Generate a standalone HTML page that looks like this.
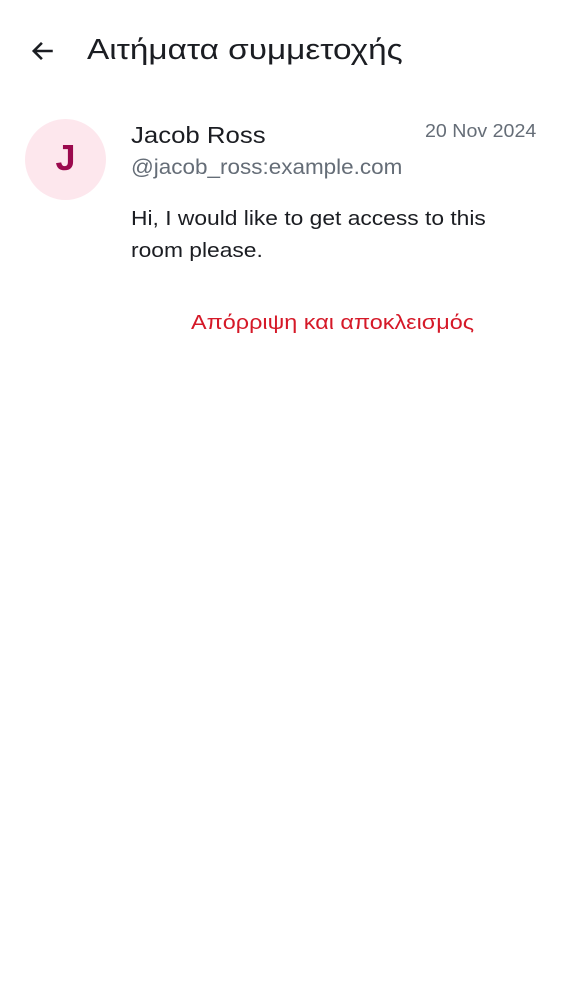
<!DOCTYPE html>
<html><head><meta charset="utf-8"><style>
html,body{margin:0;padding:0;width:562px;height:1000px;background:#fff;overflow:hidden;font-family:"Liberation Sans","DejaVu Sans",sans-serif;}
.abs{position:absolute;white-space:nowrap;transform-origin:0 0;}
</style></head><body>
<svg class="abs" style="left:30px;top:38px" width="26" height="26" viewBox="0 0 24 24"><path d="M21 12H4M11 4.5L3.5 12 11 19.5" fill="none" stroke="#1b1d22" stroke-width="2.4"/></svg>
<div class="abs" style="left:87px;top:34px;font-size:29px;color:#1b1d22;transform:scaleX(1.15)">Αιτήματα συμμετοχής</div>
<div class="abs" style="left:25px;top:119px;width:81px;height:81px;border-radius:50%;background:#fde7ed;"></div>
<div class="abs" style="left:25px;top:137px;width:81px;text-align:center;font-size:36px;font-weight:bold;color:#9b0a4e;">J</div>
<div class="abs" style="left:131px;top:122px;font-size:23px;color:#1b1d22;transform:scaleX(1.12)">Jacob Ross</div>
<div class="abs" style="left:425px;top:121px;font-size:18px;color:#656d77;transform:scaleX(1.09)">20 Nov 2024</div>
<div class="abs" style="left:131px;top:156px;font-size:21px;color:#656d77;transform:scaleX(1.07)">@jacob_ross:example.com</div>
<div class="abs" style="left:131px;top:203px;font-size:20px;line-height:32px;color:#1b1d22;transform:scaleX(1.14)">Hi, I would like to get access to this<br>room please.</div>
<div class="abs" style="left:191px;top:312px;font-size:20px;color:#d51928;transform:scaleX(1.17)">Απόρριψη και αποκλεισμός</div>
</body></html>
